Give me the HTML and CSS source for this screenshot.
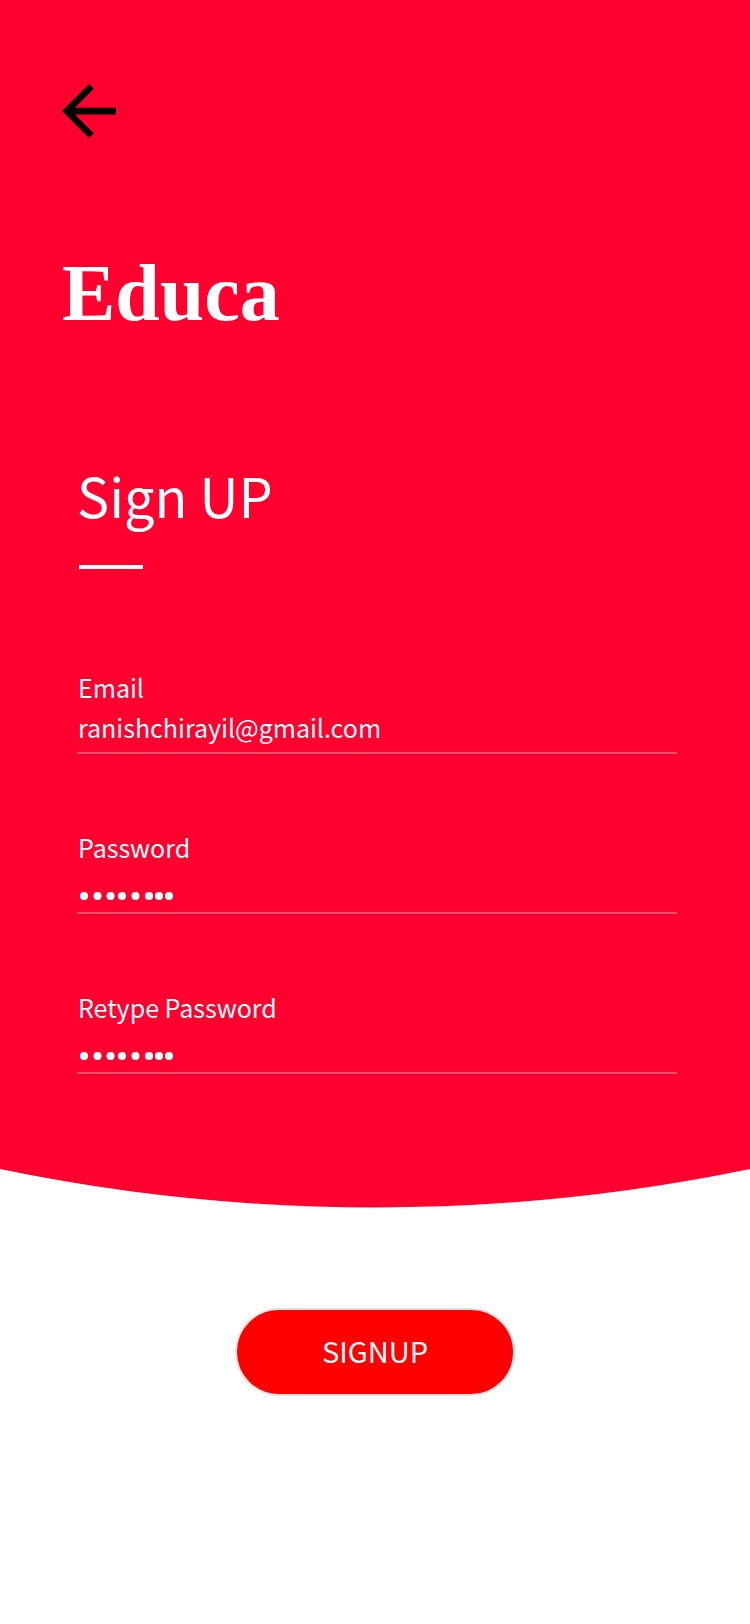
FILE: index.html
```
<!DOCTYPE html>
<html lang="en">
<head>
<meta charset="utf-8">
<meta name="viewport" content="width=device-width, initial-scale=1">
<title>Educa</title>
<link rel="stylesheet" href="styles.css">
</head>
<body>
<form class="page">
  <div class="panel">
    <button class="back" type="button" aria-label="Back">
      <svg viewBox="4 4 16 16" aria-hidden="true"><path d="M20 11H7.83l5.59-5.59L12 4l-8 8 8 8 1.41-1.41L7.83 13H20v-2z"/></svg>
    </button>
    <div class="brand">Educa</div>
    <div class="content">
      <h1 class="title">Sign UP</h1>
      <div class="rule"></div>
      <div class="fields">
        <div class="field">
          <label for="email">Email</label>
          <input id="email" type="email" value="ranishchirayil@gmail.com">
        </div>
        <div class="field">
          <label for="password">Password</label>
          <input id="password" class="secret" type="password" value="password">
          <svg class="dots" viewBox="0 0 100 8" aria-hidden="true"><circle cx="7" cy="4" r="4"/><circle cx="20.5" cy="4" r="4"/><circle cx="33.5" cy="4" r="4"/><circle cx="45" cy="4" r="4"/><circle cx="58.5" cy="4" r="4"/><circle cx="72" cy="4" r="4"/><circle cx="82" cy="4" r="4"/><circle cx="92" cy="4" r="4"/></svg>
        </div>
        <div class="field">
          <label for="retype">Retype Password</label>
          <input id="retype" class="secret" type="password" value="password">
          <svg class="dots" viewBox="0 0 100 8" aria-hidden="true"><circle cx="7" cy="4" r="4"/><circle cx="20.5" cy="4" r="4"/><circle cx="33.5" cy="4" r="4"/><circle cx="45" cy="4" r="4"/><circle cx="58.5" cy="4" r="4"/><circle cx="72" cy="4" r="4"/><circle cx="82" cy="4" r="4"/><circle cx="92" cy="4" r="4"/></svg>
        </div>
      </div>
    </div>
  </div>
  <svg class="curve" viewBox="0 0 750 39" preserveAspectRatio="none" aria-hidden="true"><path d="M0 0A1845 1845 0 0 0 750 0Z"/></svg>
  <button class="submit" type="submit">SIGNUP</button>
</form>
</body>
</html>
```
FILE: styles.css
```
* {
  box-sizing: border-box;
}

body {
  margin: 0;
  background: #fff;
  font-family: "Noto Sans CJK SC", "Noto Sans", sans-serif;
}

.page {
  display: flex;
  flex-direction: column;
}

.panel {
  padding: 84px 62px 95px;
  background: #ff002f;
  color: #fff;
}

.back {
  display: block;
  padding: 0;
  border: 0;
  background: none;
  color: #000;
}

.back svg {
  display: block;
  width: 54px;
  height: 54px;
}

.brand {
  margin-top: 115px;
  font: bold 80px/80px "Liberation Serif", serif;
}

.content {
  margin-top: 130px;
  padding: 0 11px 0 15px;
}

.title {
  margin: 0;
  font-size: 54px;
  line-height: 64px;
  font-weight: 400;
}

.rule {
  width: 64px;
  height: 4px;
  margin: 38px 2px 0;
  background: #fff;
}

.fields {
  display: flex;
  flex-direction: column;
  gap: 73px;
  margin-top: 98px;
}

.field {
  position: relative;
  display: flex;
  flex-direction: column;
  font-size: 25px;
  line-height: 40px;
}

.field label {
  padding-left: 1px;
}

.field input {
  width: 100%;
  height: 47px;
  padding: 0 0 6px 1px;
  border: 0;
  border-bottom: 2px solid #ff4d6d;
  border-radius: 0;
  outline: 0;
  background: none;
  color: #fff;
  font: inherit;
}

/* The mask is drawn over the field until it is being edited. */
.field .secret {
  padding: 10px 0 0 1px;
  color: transparent;
  font: 34px/34px "Liberation Sans", sans-serif;
}

.field .secret:focus {
  color: #fff;
}

.dots {
  position: absolute;
  left: 0;
  bottom: 14px;
  width: 100px;
  height: 8px;
  fill: #fff;
  pointer-events: none;
}

.secret:focus + .dots {
  display: none;
}

.curve {
  display: block;
  width: 100%;
  height: 39px;
  fill: #ff002f;
}

.submit {
  align-self: center;
  width: 280px;
  height: 88px;
  margin: 100px 0;
  padding: 0 0 4px;
  border: 2px solid #e2e2e2;
  border-radius: 44px;
  background: #f00;
  color: #fff;
  font: 29px/40px "Noto Sans CJK SC", "Noto Sans", sans-serif;
}
```
